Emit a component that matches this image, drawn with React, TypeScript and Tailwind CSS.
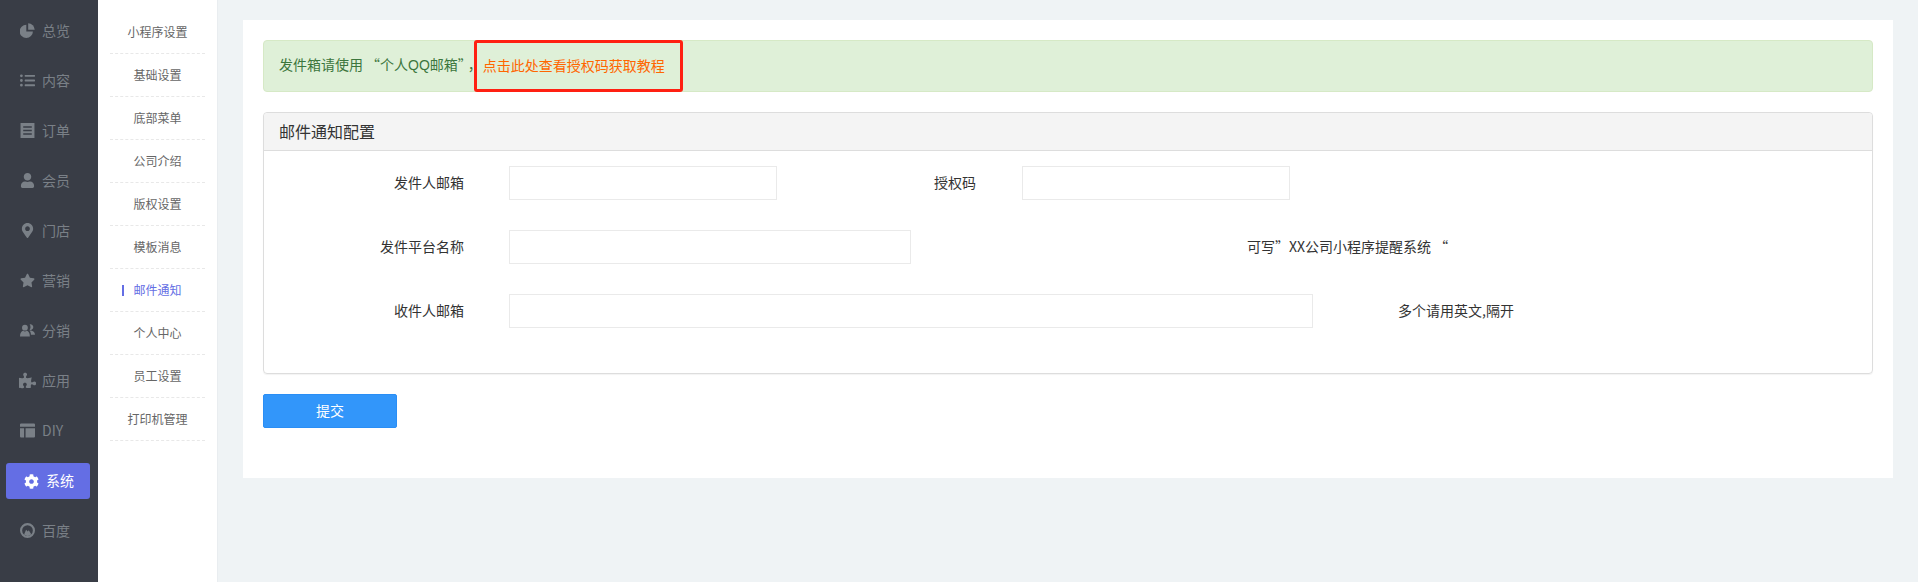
import React from 'react';
import { FaListUl, FaUser, FaMapMarkerAlt, FaStar, FaPuzzlePiece, FaCog } from 'react-icons/fa';

const PieIcon = ({ className }: { className?: string }) => (
  <svg viewBox="0 0 15 15" className={className} fill="currentColor">
    <path d="M6.300 1.800V8.400h6.600A6.600 6.600 0 1 1 6.300 1.800z" />
    <path d="M8.200 0.300A6.800 6.800 0 0 1 14.700 6.800H8.200z" />
  </svg>
);

const OrderIcon = ({ className }: { className?: string }) => (
  <svg viewBox="0 0 14 14" className={className} fill="currentColor">
    <path fillRule="evenodd" d="M0.5 0h13v14H0.500zM3 3v1.500h8V3zM3 6.200v1.500h8V6.200zM3 9.500V11h8V9.500z" />
  </svg>
);

const LayoutIcon = ({ className }: { className?: string }) => (
  <svg viewBox="0 0 14 14" className={className} fill="currentColor">
    <path d="M0 1.500a1 1 0 0 1 1-1h12a1 1 0 0 1 1 1V3.500H0zM0 5h3.800v8.500H1a1 1 0 0 1-1-1zM5.200 5H14v7.500a1 1 0 0 1-1 1H5.200z" />
  </svg>
);

const BaiduIcon = ({ className }: { className?: string }) => (
  <svg viewBox="0 0 14 14" className={className} fill="currentColor">
    <path fillRule="evenodd" d="M7 0a7 7 0 1 1 0 14A7 7 0 0 1 7 0zm0 2a5 5 0 1 0 0 10A5 5 0 0 0 7 2z" />
    <path d="M3.800 10.800 5.700 6.200l1.500 1.700 1-1.200 2.300 3.800A5 5 0 0 1 3.800 10.800z" />
  </svg>
);

const UsersIcon = ({ className }: { className?: string }) => (
  <svg viewBox="0 0 14 14" className={className} fill="currentColor">
    <circle cx="4.600" cy="4.400" r="2.700" />
    <path d="M0 12.500c0-3.200 1.400-4.800 2.900-5.200.5.400 1.100.6 1.700.6s1.200-.2 1.700-.6C7.900 7.700 9.200 9.300 9.200 12.500z" />
    <path d="M9 1.200a2.700 2.700 0 1 1 .6 5.300c-.3 0-.6 0-.9-.1.700-.6 1.100-1.500 1.100-2.500 0-1-.3-1.900-.8-2.700z" />
    <path d="M10.200 11c0-1.700-.5-3.100-1.500-4 .5.100 1 .1 1.500-.1 1.900.3 3.800 1.600 3.800 4.100z" />
  </svg>
);

const menu = [
  { title: '总览', icon: PieIcon },
  { title: '内容', icon: FaListUl },
  { title: '订单', icon: OrderIcon },
  { title: '会员', icon: FaUser },
  { title: '门店', icon: FaMapMarkerAlt },
  { title: '营销', icon: FaStar },
  { title: '分销', icon: UsersIcon },
  { title: '应用', icon: FaPuzzlePiece, big: true },
  { title: 'DIY', icon: LayoutIcon },
  { title: '系统', icon: FaCog, active: true },
  { title: '百度', icon: BaiduIcon },
];

const subMenu = ['小程序设置', '基础设置', '底部菜单', '公司介绍', '版权设置', '模板消息', '邮件通知', '个人中心', '员工设置', '打印机管理'];

const App = () => {
  return (
    <div className="flex min-h-screen bg-[#eff3f5] font-['Noto_Sans_CJK_SC','Liberation_Sans',sans-serif] text-[14px] text-[#333]" lang="zh-CN">
      {/* Main menu */}
      <div className="w-[98px] shrink-0 bg-[#393d46] pt-[6px]">
        {menu.map((item) =>
          item.active ? (
            <div key={item.title} className="flex h-[50px] items-center px-[6px]">
              <div className="flex h-[36px] w-[84px] items-center rounded-[3px] bg-[#646ee4] pl-[18px] text-white">
                <item.icon className="size-[15px] shrink-0" />
                <span className="ml-[7px] -mt-[2px]">{item.title}</span>
              </div>
            </div>
          ) : (
            <div key={item.title} className="flex h-[50px] items-center pl-[20px] text-[#7a8087]">
              <item.icon className={item.big ? '-mt-[2px] size-[15px] shrink-0 scale-[1.15]' : '-mt-[2px] size-[15px] shrink-0'} />
              <span className="ml-[7px] -mt-[2px]">{item.title}</span>
            </div>
          )
        )}
      </div>

      {/* Sub menu */}
      <div className="w-[120px] shrink-0 border-r border-[#e9edf0] bg-white px-[12px] pt-[11px] text-[12px] text-[#666]">
        {subMenu.map((name) => (
          <div key={name} className="relative flex h-[43px] items-center justify-center border-b border-dashed border-[#e8e8e8]">
            {name === '邮件通知' ? (
              <>
                <span className="absolute left-[12px] top-[16px] h-[11px] w-[2px] bg-[#646ee4]" />
                <span className="text-[#646ee4]">{name}</span>
              </>
            ) : (
              name
            )}
          </div>
        ))}
      </div>

      {/* Content */}
      <div className="min-w-0 flex-1 pl-[25px] pr-[25px] pt-[20px]">
        <div className="h-[458px] bg-white px-[20px] pt-[20px]">
          <div className="relative flex h-[52px] items-center rounded-[4px] border border-[#d6e9c6] bg-[#dff0d8] pb-[2px] pl-[15px] text-[#3c763d]">
            <span>
              发件箱请使用<span className="pl-[3px]">“</span>个人<span className="font-['Liberation_Sans',sans-serif]">QQ</span>邮箱<span className="pr-[3px]">”</span>，
            </span>
            <span className="ml-[1px] text-[#ff6600]">点击此处查看授权码获取教程</span>
            <div className="absolute -top-px left-[210px] h-[52px] w-[209px] rounded-[3px] border-[3px] border-[#ff2012]" />
          </div>

          <div className="mt-[20px] h-[262px] rounded-[4px] border border-[#ddd] shadow-[0_1px_1px_rgba(0,0,0,0.05)]">
            <div className="flex h-[38px] items-center rounded-t-[4px] border-b border-[#ddd] bg-[#f4f4f4] pb-[2px] pl-[15px] text-[16px]">邮件通知配置</div>
            <div className="flex flex-col gap-[30px] pt-[15px]">
              <div className="flex h-[34px] items-center">
                <div className="-mt-[2px] w-[200px] text-right">发件人邮箱</div>
                <div className="ml-[45px] h-[34px] w-[268px] border border-[#eaeaea]" />
                <div className="-mt-[2px] w-[199px] text-right">授权码</div>
                <div className="ml-[46px] h-[34px] w-[268px] border border-[#eaeaea]" />
              </div>
              <div className="flex h-[34px] items-center">
                <div className="-mt-[2px] w-[200px] text-right">发件平台名称</div>
                <div className="ml-[45px] h-[34px] w-[402px] border border-[#eaeaea]" />
                <div className="-mt-[2px] ml-[336px]">可写”XX公司小程序提醒系统 “</div>
              </div>
              <div className="flex h-[34px] items-center">
                <div className="-mt-[2px] w-[200px] text-right">收件人邮箱</div>
                <div className="ml-[45px] h-[34px] w-[804px] border border-[#eaeaea]" />
                <div className="-mt-[2px] ml-[85px]">多个请用英文,隔开</div>
              </div>
            </div>
          </div>

          <button className="mt-[20px] flex h-[34px] w-[134px] items-center justify-center rounded-[2px] border border-[#2a8ef5] bg-[#3296fa] pb-[2px] text-white">提交</button>
        </div>
      </div>
    </div>
  );
};

export default App;
